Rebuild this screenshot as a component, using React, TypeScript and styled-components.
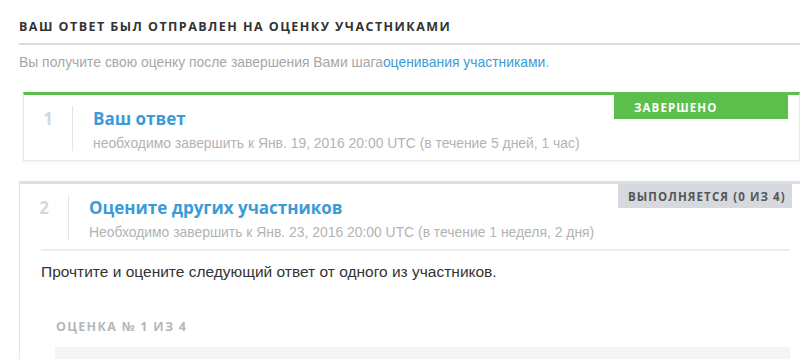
import React from 'react';
import styled, { createGlobalStyle } from 'styled-components';

const GlobalStyle = createGlobalStyle`
  html, body {
    margin: 0;
    padding: 0;
    background: #fff;
    overflow: hidden;
  }
`;

const Page = styled.div`
  width: 785px;
  padding: 19px 0 0 19px;
  font-family: "Liberation Sans", Arial, sans-serif;
`;

const Heading = styled.h2`
  margin: 0;
  padding-bottom: 8px;
  border-bottom: 2px solid #d7dce1;
  font-family: "Open Sans", sans-serif;
  font-size: 12.5px;
  font-weight: 700;
  letter-spacing: 1.45px;
  line-height: 16px;
  color: #333;
  text-transform: uppercase;
`;

const Intro = styled.p`
  margin: 8px 0 0;
  font-size: 13.9px;
  line-height: 18px;
  color: #a7a7a7;

  a {
    color: #3d9bd9;
    text-decoration: none;
  }
`;

const Card = styled.section<{ $accent: string; $inset?: number }>`
  position: relative;
  margin: ${p => (p.$inset ? `0 ${p.$inset}px` : '0')};
  background: #fff;
  border: 1px solid #e6e8ea;
  border-top: 3px solid ${p => p.$accent};
  box-shadow: 0 1px 2px rgba(0, 0, 0, 0.06);
`;

const StepList = styled.div`
  display: flex;
  flex-direction: column;
  gap: 20px;
  margin-top: 21px;
`;

const StepHeader = styled.div`
  display: flex;
  align-items: flex-start;
  padding: 12px 0 8px;
`;

const StepNumber = styled.div`
  width: 48px;
  text-align: center;
  font-family: "Open Sans", sans-serif;
  font-weight: 700;
  font-size: 17px;
  line-height: 24px;
  color: #d4d8dc;
`;

const StepDivider = styled.div`
  width: 1px;
  height: 45px;
  background: #e3e5e8;
  margin-top: -1px;
`;

const StepText = styled.div`
  padding-left: 20px;
  display: flex;
  flex-direction: column;
`;

const StepTitle = styled.h3`
  margin: 0;
  font-family: "Open Sans", sans-serif;
  font-weight: 700;
  font-size: 17px;
  line-height: 24px;
  color: #3a9bd8;
`;

const StepDue = styled.div`
  margin-top: 3px;
  font-size: 13.9px;
  line-height: 18px;
  color: #b3b3b3;
`;

const Badge = styled.div<{ $bg: string; $fg: string; $pad: number }>`
  position: absolute;
  top: 0;
  right: 11px;
  width: 174px;
  height: 24px;
  box-sizing: border-box;
  padding-left: ${p => p.$pad}px;
  display: flex;
  align-items: center;
  background: ${p => p.$bg};
  color: ${p => p.$fg};
  font-family: "Open Sans", sans-serif;
  font-weight: 700;
  font-size: 11.5px;
  letter-spacing: 1.1px;
  text-transform: uppercase;
`;

const StepBody = styled.div`
  margin: 0 13px 0 21px;
  border-top: 2px solid #eceef0;
  padding-top: 12px;
`;

const Instruction = styled.p`
  margin: 0;
  font-size: 15.5px;
  line-height: 18px;
  color: #333;
`;

const AssessTitle = styled.h4`
  margin: 38px 0 0 15px;
  font-family: "Open Sans", sans-serif;
  font-weight: 700;
  font-size: 12.5px;
  line-height: 16px;
  letter-spacing: 1.3px;
  color: #b5b7b9;
  text-transform: uppercase;
`;

const AssessBox = styled.div`
  margin: 12px 0 0 14px;
  height: 60px;
  background: #f3f4f5;
`;

export default function App() {
  return (
    <>
      <GlobalStyle />
      <Page>
        <Heading>Ваш ответ был отправлен на оценку участниками</Heading>
        <Intro>
          Вы получите свою оценку после завершения Вами шага<a href="#">оценивания участниками</a>.
        </Intro>
        <StepList>
          <Card $accent="#5cc04c" $inset={4}>
            <Badge $bg="#5cbf4b" $fg="#fff" $pad={20}>Завершено</Badge>
            <StepHeader>
              <StepNumber>1</StepNumber>
              <StepDivider />
              <StepText>
                <StepTitle>Ваш ответ</StepTitle>
                <StepDue>необходимо завершить к Янв. 19, 2016 20:00 UTC (в течение 5 дней, 1 час)</StepDue>
              </StepText>
            </StepHeader>
          </Card>
          <Card $accent="#dde0e3">
            <Badge $bg="#d6d9dd" $fg="#555" $pad={10}>Выполняется (0 из 4)</Badge>
            <StepHeader>
              <StepNumber>2</StepNumber>
              <StepDivider />
              <StepText>
                <StepTitle>Оцените других участников</StepTitle>
                <StepDue>Необходимо завершить к Янв. 23, 2016 20:00 UTC (в течение 1 неделя, 2 дня)</StepDue>
              </StepText>
            </StepHeader>
            <StepBody>
              <Instruction>Прочтите и оцените следующий ответ от одного из участников.</Instruction>
              <AssessTitle>Оценка № 1 из 4</AssessTitle>
              <AssessBox />
            </StepBody>
          </Card>
        </StepList>
      </Page>
    </>
  );
}
